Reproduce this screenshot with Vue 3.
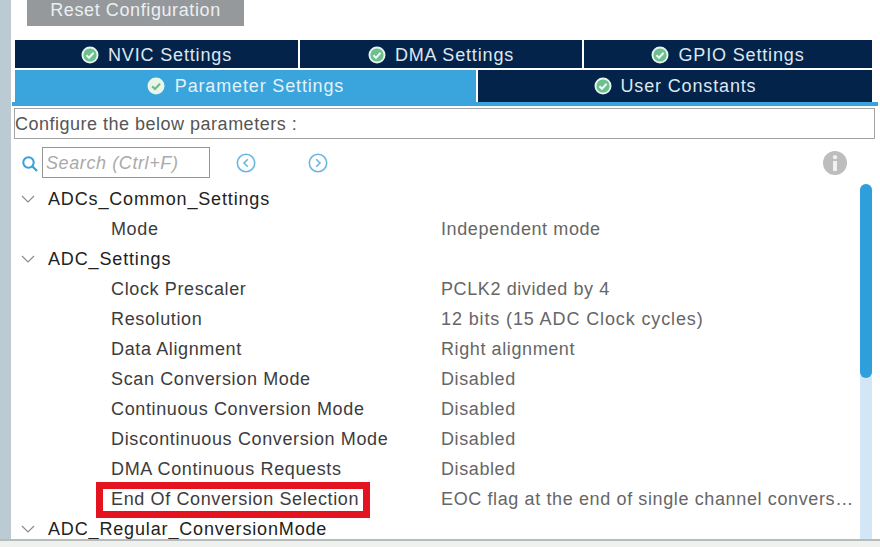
<template>
  <div class="page">
    <div class="strip"></div>
    <div class="panel">
      <div class="reset-wrap">
        <button class="reset">Reset Configuration</button>
      </div>

      <div class="tabs">
        <div class="tab-row top">
          <div v-for="t in topTabs" :key="t" class="tab">
            <svg class="check" viewBox="0 0 18 18">
              <circle cx="9" cy="9" r="8.5" fill="#e6f6ec" />
              <circle cx="9" cy="9" r="6.6" fill="#6cbf8f" />
              <path d="M5.4 9.2 8 11.8l4.6-5" fill="none" stroke="#eef8f0" stroke-width="2" />
            </svg>
            {{ t }}
          </div>
        </div>
        <div class="tab-row bottom">
          <div class="tab active">
            <svg class="check" viewBox="0 0 18 18">
              <circle cx="9" cy="9" r="8.5" fill="#e9f5e6" />
              <path d="M5.2 9.2 8 12l5-5.2" fill="none" stroke="#6fb98a" stroke-width="2.2" />
            </svg>
            Parameter Settings
          </div>
          <div class="tab user">
            <svg class="check" viewBox="0 0 18 18">
              <circle cx="9" cy="9" r="8.5" fill="#e6f6ec" />
              <circle cx="9" cy="9" r="6.6" fill="#6cbf8f" />
              <path d="M5.4 9.2 8 11.8l4.6-5" fill="none" stroke="#eef8f0" stroke-width="2" />
            </svg>
            User Constants
          </div>
        </div>
      </div>

      <div class="configure">Configure the below parameters :</div>

      <div class="search-row">
        <svg class="search-icon" viewBox="0 0 18 18">
          <circle cx="7.5" cy="7.5" r="5.2" fill="none" stroke="#3aa0d8" stroke-width="2" />
          <path d="M11.4 11.4 16 16" stroke="#3aa0d8" stroke-width="2.2" />
        </svg>
        <div class="search">Search (Ctrl+F)</div>
        <svg class="nav first" viewBox="0 0 20 20">
          <circle cx="10" cy="10" r="8.7" fill="none" stroke="#6db7de" stroke-width="1.6" />
          <path d="M11.8 6.2 8 10l3.8 3.8" fill="none" stroke="#6db7de" stroke-width="1.6" />
        </svg>
        <svg class="nav second" viewBox="0 0 20 20">
          <circle cx="10" cy="10" r="8.7" fill="none" stroke="#6db7de" stroke-width="1.6" />
          <path d="M8.2 6.2 12 10l-3.8 3.8" fill="none" stroke="#6db7de" stroke-width="1.6" />
        </svg>
        <svg class="info" viewBox="0 0 24 24">
          <circle cx="12" cy="12" r="12" fill="#bdbdbd" />
          <circle cx="12" cy="6.2" r="2.1" fill="#f2f2f2" />
          <rect x="10" y="10" width="4" height="10" fill="#f2f2f2" />
        </svg>
      </div>

      <div class="tree-wrap">
        <div class="tree">
          <div v-for="row in rows" :key="row.label" class="row" :class="{ group: row.group }">
            <svg v-if="row.group" class="chev" viewBox="0 0 14 8">
              <path d="M1 1l6 6 6-6" fill="none" stroke="#8c8c8c" stroke-width="1.2" />
            </svg>
            <span class="label" :class="{ marked: row.marked }">{{ row.label }}</span>
            <span v-if="row.value" class="value" :class="{ long: row.long, cut: row.marked }">{{ row.value }}</span>
          </div>
        </div>
        <div class="scroll"><div class="thumb"></div></div>
      </div>
    </div>
    <div class="foot"></div>
  </div>
</template>

<script setup>
const topTabs = ['NVIC Settings', 'DMA Settings', 'GPIO Settings']

const rows = [
  { label: 'ADCs_Common_Settings', group: true },
  { label: 'Mode', value: 'Independent mode' },
  { label: 'ADC_Settings', group: true },
  { label: 'Clock Prescaler', value: 'PCLK2 divided by 4' },
  { label: 'Resolution', value: '12 bits (15 ADC Clock cycles)', long: true },
  { label: 'Data Alignment', value: 'Right alignment' },
  { label: 'Scan Conversion Mode', value: 'Disabled' },
  { label: 'Continuous Conversion Mode', value: 'Disabled' },
  { label: 'Discontinuous Conversion Mode', value: 'Disabled' },
  { label: 'DMA Continuous Requests', value: 'Disabled' },
  { label: 'End Of Conversion Selection', value: 'EOC flag at the end of single channel conversion', marked: true },
  { label: 'ADC_Regular_ConversionMode', group: true },
]
</script>

<style>
html, body { margin: 0; background: #fff; overflow: hidden; }
</style>

<style scoped>
.page { width: 880px; height: 547px; display: flex; flex-wrap: wrap; overflow: hidden; font-family: "Liberation Sans", Arial, sans-serif; font-size: 18px; letter-spacing: 0.6px; color: #333; background: #fff; }
.strip { width: 11px; height: 539px; background: #bccad3; }
.panel { width: 869px; height: 539px; overflow: hidden; }
.foot { width: 880px; height: 8px; background: #eef1ee; border-top: 2px solid #b5bcba; box-sizing: border-box; }

.reset-wrap { height: 40px; padding-left: 16px; }
.reset { display: block; width: 217px; height: 26px; border: 0; padding: 0 0 14px; background: #96999c; color: #eceff1; font: inherit; letter-spacing: 0.6px; }

.tabs { width: 866px; margin-left: 1px; border-bottom: 4px solid #3aa4dc; }
.tab-row { width: 857px; margin-left: 3px; }
.tab-row.top { display: grid; grid-template-columns: 283px 284px 290px; height: 30px; }
.tab-row.bottom { display: flex; height: 32px; }
.tab { display: flex; align-items: center; justify-content: center; gap: 9px; padding-top: 2px; box-sizing: border-box; background: #03234b; color: #dfe7ee; letter-spacing: 0.85px; border-left: 2px solid #fff; border-bottom: 2px solid #fff; }
.tab:first-child { border-left: 0; }
.tab-row.bottom .tab { border-bottom: 0; padding-top: 0; }
.tab.active { flex: none; width: 461px; background: #3aa4dc; color: #e2f2fa; gap: 10px; }
.tab.user { flex: 1; gap: 9px; }
.check { width: 18px; height: 18px; flex: none; }

.configure { width: 861px; height: 31px; box-sizing: border-box; margin: 2px 0 0 3px; border: 1px solid #a3a3a3; line-height: 30px; color: #555; letter-spacing: 0.5px; }

.search-row { display: flex; align-items: center; height: 33px; margin-top: 7px; padding-left: 10px; }
.search-icon { width: 18px; height: 18px; flex: none; margin-top: 2px; }
.search { width: 168px; height: 31px; box-sizing: border-box; margin-left: 3px; border: 1px solid #969696; padding-left: 3px; line-height: 30px; font-style: italic; color: #aaa; }
.nav { width: 20px; height: 20px; flex: none; }
.nav.first { margin-left: 26px; }
.nav.second { margin-left: 52px; }
.info { width: 24px; height: 24px; flex: none; margin-left: auto; margin-right: 33px; }

.tree-wrap { display: flex; margin-top: 5px; }
.tree { width: 849px; }
.row { display: flex; align-items: center; height: 30px; padding-left: 100px; white-space: nowrap; }
.row.group { padding-left: 10px; }
.label { width: 330px; flex: none; box-sizing: border-box; color: #3c3c3c; letter-spacing: 0.63px; }
.group .label { color: #222; letter-spacing: 0.85px; }
.chev { width: 14px; height: 8px; flex: none; margin-right: 13px; }
.marked { position: relative; }
.marked::after { content: ""; position: absolute; left: -15px; top: -7px; width: 274px; height: 36px; box-sizing: border-box; border: 7px solid #e3141f; }
.value { width: 412px; overflow: hidden; text-overflow: ellipsis; color: #666; letter-spacing: 0.6px; }
.value.long { letter-spacing: 0.88px; }
.value.cut { width: 415px; letter-spacing: 0.62px; }

.scroll { width: 12px; height: 356px; margin-top: 0; background: #d3e6f5; border-radius: 6px 6px 0 0; }
.thumb { height: 194px; background: #2f9fdc; border-radius: 6px; }
</style>
